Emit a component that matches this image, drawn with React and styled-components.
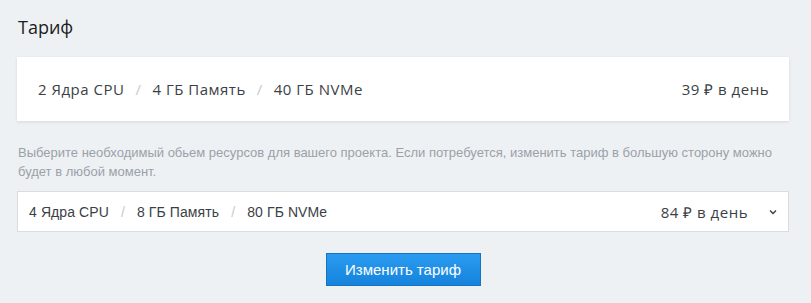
import React from "react";
import styled, { createGlobalStyle } from "styled-components";

const Global = createGlobalStyle`
  html, body { margin: 0; padding: 0; background: #eef1f4; }
  body { font-family: "Open Sans", sans-serif; }
`;

const Page = styled.div`
  width: 811px;
  height: 303px;
  box-sizing: border-box;
  padding: 14px 22px 0 17px;
  display: flex;
  flex-direction: column;
`;

const Title = styled.h2`
  margin: 0 0 0 1px;
  font-family: "Open Sans", sans-serif;
  font-weight: 400;
  font-size: 18px;
  line-height: 26px;
  color: #1b1d21;
`;

const Card = styled.div`
  margin-top: 17px;
  height: 64px;
  background: #fff;
  box-shadow: 0 1px 3px rgba(30, 50, 80, 0.12);
  display: flex;
  align-items: center;
  justify-content: space-between;
  padding: 0 20px 0 21px;
  font-family: "Open Sans", sans-serif;
  font-size: 15px;
  letter-spacing: 0.5px;
  color: #3b3f45;
`;

const Specs = styled.div`
  display: flex;
  align-items: center;
`;

const Sep = styled.span`
  color: #c5cad0;
  margin: 0 ${p => p.$gap}px;
`;

const Note = styled.p`
  margin: 22px 0 0 1px;
  font-family: "Liberation Sans", sans-serif;
  font-size: 13px;
  line-height: 19px;
  color: #9aa1a9;
`;

const Select = styled.div`
  margin-top: 10px;
  height: 41px;
  box-sizing: border-box;
  background: #fff;
  border: 1px solid #d9dde1;
  display: flex;
  align-items: center;
  padding: 0 10px 0 11px;
  font-family: "Liberation Sans", sans-serif;
  font-size: 14px;
  letter-spacing: 0.1px;
  color: #3b3f45;
`;

const Price = styled.span`
  margin-left: auto;
  font-family: "Open Sans", sans-serif;
  font-size: 15px;
  letter-spacing: 0.5px;
`;

const Chevron = styled.svg`
  margin-left: 20px;
  width: 10px;
  height: 10px;
`;

const ButtonRow = styled.div`
  display: flex;
  justify-content: center;
  margin-top: 21px;
`;

const Button = styled.button`
  width: 155px;
  height: 33px;
  border: 1px solid #1773c2;
  background: linear-gradient(#2a9cf0, #1583dc);
  color: #fff;
  font-family: "Liberation Sans", sans-serif;
  font-size: 15px;
  padding: 0;
  cursor: pointer;
`;

const SpecList = ({ items, gap }) => (
  <Specs>
    {items.map((t, i) => (
      <React.Fragment key={t}>
        {i > 0 && <Sep $gap={gap}>/</Sep>}
        <span>{t}</span>
      </React.Fragment>
    ))}
  </Specs>
);

export default function App() {
  return (
    <>
      <Global />
      <Page>
        <Title>Тариф</Title>
        <Card>
          <SpecList items={["2 Ядра CPU", "4 ГБ Память", "40 ГБ NVMe"]} gap={11} />
          <span>39 ₽ в день</span>
        </Card>
        <Note>
          Выберите необходимый обьем ресурсов для вашего проекта. Если потребуется, изменить тариф в большую сторону можно будет в любой момент.
        </Note>
        <Select>
          <SpecList items={["4 Ядра CPU", "8 ГБ Память", "80 ГБ NVMe"]} gap={12} />
          <Price>84 ₽ в день</Price>
          <Chevron viewBox="0 0 10 10">
            <path d="M2 3.5 L5 6.5 L8 3.5" fill="none" stroke="#3b3f45" strokeWidth="1.4" />
          </Chevron>
        </Select>
        <ButtonRow>
          <Button>Изменить тариф</Button>
        </ButtonRow>
      </Page>
    </>
  );
}
